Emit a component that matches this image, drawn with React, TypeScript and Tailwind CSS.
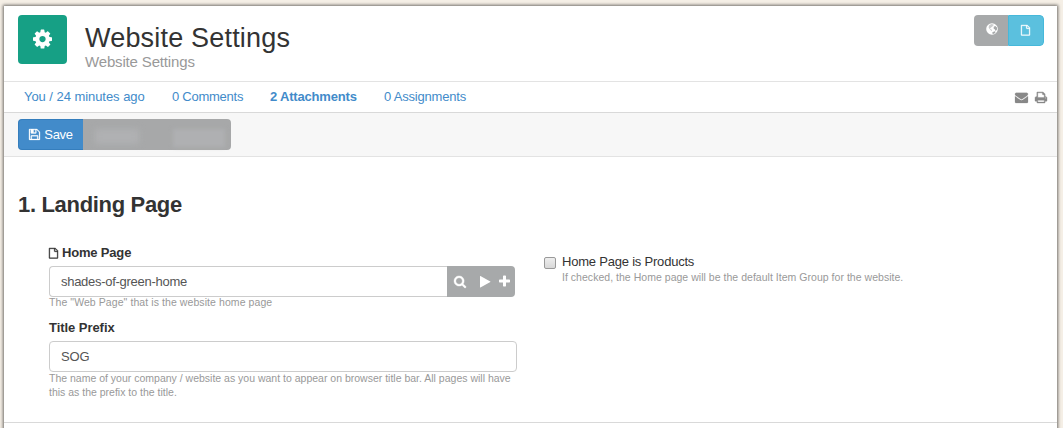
import React from "react";

const paths = {
  cog: "M1024 896q0-106-75-181t-181-75-181 75-75 181 75 181 181 75 181-75 75-181zm512-109v222q0 12-8 23t-20 13l-185 28q-19 54-39 91 35 50 107 138 10 12 10 25t-9 23q-27 37-99 108t-94 71q-12 0-26-9l-138-108q-44 23-91 38-16 136-29 186-7 28-36 28h-222q-14 0-24.5-8.5t-11.5-21.5l-28-184q-49-16-90-37l-141 107q-10 9-25 9-14 0-25-11-126-114-165-168-7-10-7-23 0-12 8-23 15-21 51-66.5t54-70.5q-27-50-41-99l-183-27q-13-2-21-12.5t-8-23.5v-222q0-12 8-23t19-13l186-28q14-46 39-92-40-57-107-138-10-12-10-24 0-10 9-23 26-36 98.5-107.5t94.500-71.500q13 0 26 10l138 107q44-23 91-38 16-136 29-186 7-28 36-28h222q14 0 24.500 8.500t11.500 21.500l28 184q49 16 90 37l142-107q9-9 24-9 13 0 25 10 129 119 165 170 7 8 7 22 0 12-8 23-15 21-51 66.500t-54 70.500q26 50 41 98l183 28q13 2 21 12.500t8 23.500z",
  save: "M384 1536h768v-384h-768v384zm896 0h128v-896q0-14-10-38.500t-20-34.500l-281-281q-10-10-34-20t-39-10v416q0 40-28 68t-68 28h-576q-40 0-68-28t-28-68v-416h-128v1280h128v-416q0-40 28-68t68-28h832q40 0 68 28t28 68v416zm-384-928v-320q0-13-9.500-22.500t-22.500-9.500h-192q-13 0-22.500 9.500t-9.500 22.500v320q0 13 9.500 22.500t22.500 9.500h192q13 0 22.500-9.500t9.500-22.500zm640 32v928q0 40-28 68t-68 28h-1344q-40 0-68-28t-28-68v-1344q0-40 28-68t68-28h928q40 0 88 20t76 48l280 280q28 28 48 76t20 88z",
  file: "M1468 380q28 28 48 76t20 88v1152q0 40-28 68t-68 28h-1344q-40 0-68-28t-28-68v-1600q0-40 28-68t68-28h896q40 0 88 20t76 48zm-444-244v376h376q-10-29-22-41l-313-313q-12-12-41-22zm384 1528v-1024h-416q-40 0-68-28t-28-68v-416h-768v1536h1280z",
  search: "M1152 832q0-185-131.500-316.500t-316.500-131.500-316.500 131.500-131.500 316.500 131.500 316.500 316.500 131.500 316.500-131.500 131.500-316.500zm512 832q0 52-38 90t-90 38q-54 0-90-38l-343-342q-179 124-399 124-143 0-273.500-55.500t-225-150-150-225-55.500-273.500 55.500-273.500 150-225 225-150 273.500-55.500 273.500 55.500 225 150 150 225 55.500 273.500q0 220-124 399l343 343q37 37 37 90z",
  play: "M1384 927l-1328 738q-23 13-39.500 3t-16.500-36v-1472q0-26 16.500-36t39.500 3l1328 738q23 13 23 31t-23 31z",
  plus: "M1408 800v192q0 40-28 68t-68 28h-416v416q0 40-28 68t-68 28h-192q-40 0-68-28t-28-68v-416h-416q-40 0-68-28t-28-68v-192q0-40 28-68t68-28h416v-416q0-40 28-68t68-28h192q40 0 68 28t28 68v416h416q40 0 68 28t28 68z",
  mail: "M1792 710v794q0 66-47 113t-113 47h-1472q-66 0-113-47t-47-113v-794q44 49 101 87 362 246 497 345 57 42 92.500 65.500t94.500 48 110 24.500h2q51 0 110-24.500t94.500-48 92.500-65.500q170-123 498-345 57-39 100-87zm0-294q0 79-49 151t-122 123q-376 261-468 325-10 7-42.500 30.500t-54 38-52 32.500-57.500 27-50 9h-2q-23 0-50-9t-57.500-27-52-32.500-54-38-42.500-30.500q-91-64-262-182.500t-205-142.500q-62-42-117-115.500t-55-136.500q0-78 41.500-130t118.500-52h1472q65 0 112.500 47t47.500 113z",
  print: "M384 1536h896v-256h-896v256zm0-640h896v-384h-160q-40 0-68-28t-28-68v-160h-640v640zm1152 64q0-26-19-45t-45-19-45 19-19 45 19 45 45 19 45-19 19-45zm128 0v416q0 13-9.500 22.500t-22.500 9.500h-224v160q0 40-28 68t-68 28h-960q-40 0-68-28t-28-68v-160h-224q-13 0-22.500-9.500t-9.500-22.500v-416q0-79 56.500-135.500t135.500-56.500h64v-544q0-40 28-68t68-28h672q40 0 88 20t76 48l152 152q28 28 48 76t20 88v256h64q79 0 135.500 56.500t56.500 135.500z",
};

function Icon({ name, width, className = "", weight = 0 }: { name: keyof typeof paths; width: number; className?: string; weight?: number }) {
  const w = name === "mail" ? 1792 : name === "search" || name === "print" ? 1664 : name === "play" || name === "plus" ? 1408 : 1536;
  return (
    <svg viewBox={`0 0 ${w} 1792`} width={width} height={(width * 1792) / w} fill="currentColor" stroke="currentColor" strokeWidth={weight} className={`shrink-0 overflow-visible ${className}`}>
      <path d={paths[name]} />
    </svg>
  );
}

function Globe() {
  return (
    <svg viewBox="0 0 12 12" width="12" height="12" className="mb-[3px] ml-px shrink-0">
      <circle cx="6" cy="6" r="5.800" fill="#fff" />
      <path d="M3.200 2.200 5.500 1l2 .5.3.8-1 .5-.5 1-1 .4-.7.8-.8.1.8.9 1 .4.400.9-.5.900-1.200-1.500L3.300 5.800 2.600 4.300z" fill="#a7a9aa" opacity=".6" />
      <path d="M7.700 3.800 9.300 3l1.700 1.600v1.800l-1 1.400-.9-.4-.3-1.200-1.100-.5z" fill="#a7a9aa" />
      <path d="M6.300 9.300 8.800 8.300l.9.800-1.500 1.600-1.600.3z" fill="#a7a9aa" />
    </svg>
  );
}

function Help({ children, className = "" }: { children: React.ReactNode; className?: string }) {
  return <p className={`text-[10.500px] leading-[14px] text-[#999] ${className}`}>{children}</p>;
}

export default function App() {
  return (
    <div className="h-[428px] w-[1063px] overflow-hidden bg-[#f5efe6] pl-1 pt-1.5 font-['Liberation_Sans',sans-serif] text-[13px] text-[#333]">
      <main className="h-[430px] w-[1053px] bg-white shadow-[0_0_3px_1px_rgba(0,0,0,0.55)]">
        <header className="flex h-[76px] items-start border-b border-[#e3e3e3] pl-3.5 pr-[13px] pt-[9px]">
          <div className="flex h-[49px] w-[49px] items-center justify-center rounded bg-[#16a085] text-white">
            <Icon name="cog" width={19} />
          </div>
          <div className="ml-[18px]">
            <h1 className="mt-[7px] text-[27px] leading-[32px] tracking-[0.190px]">Website Settings</h1>
            <p className="text-[15px] leading-[16px] tracking-[-0.160px] text-[#999]">Website Settings</p>
          </div>
          <div className="ml-auto flex h-[31px] overflow-hidden rounded">
            <button className="flex w-[34px] items-center justify-center bg-[#a7a9aa]"><Globe /></button>
            <button className="flex w-9 items-center justify-center rounded-r border border-[#46b8da] bg-[#5bc0de] pr-px text-white">
              <Icon name="file" width={9} weight={60} className="mb-px" />
            </button>
          </div>
        </header>

        <nav className="flex h-[31px] items-center border-b border-[#d9d9d9] pl-5 pr-2.5 text-[#428bca]">
          <a className="w-[148px] tracking-[-0.050px]">You / 24 minutes ago</a>
          <a className="w-[98px] tracking-[-0.250px]">0 Comments</a>
          <a className="w-[114px] font-bold tracking-[-0.180px]">2 Attachments</a>
          <a className="tracking-[-0.200px]">0 Assignments</a>
          <div className="ml-auto flex items-center gap-[7px] text-[#888]">
            <Icon name="mail" width={13} weight={30} />
            <Icon name="print" width={12} weight={50} />
          </div>
        </nav>

        <div className="flex h-11 items-start border-b border-[#e3e3e3] bg-[#f7f7f7] pl-3.5 pt-1.5">
          <button className="flex h-[31px] w-[65px] items-center justify-center gap-1 rounded-l border border-r-0 border-[#357ebd] bg-[#428bca] text-white">
            <Icon name="save" width={11} weight={40} />
            <span className="tracking-[-0.300px]">Save</span>
          </button>
          <div className="flex h-[31px] w-[148px] items-center justify-between rounded-r bg-[#a7a8a9] pl-3 pr-1.5">
            <div className="mt-1 h-[15px] w-11 bg-[#b0b1b3] blur-[3px]" />
            <div className="mt-1.5 h-[18px] w-[52px] bg-[#afb0b2] blur-[2px]" />
          </div>
        </div>

        <section className="h-[266px] border-b border-[#d9d9d9] pt-[35px]">
          <h2 className="pl-3.5 text-[22px] font-bold leading-[26px] tracking-[-0.320px]">1. Landing Page</h2>
          <div className="flex pl-[45px] pt-[27px]">
            <div className="w-[468px]">
              <label className="flex h-4 items-center gap-1 font-bold tracking-[-0.180px]">
                <Icon name="file" width={9} weight={70} />
                Home Page
              </label>
              <div className="mt-[5px] flex h-[31px] w-[466px]">
                <div className="flex w-[398px] items-center rounded-l border border-r-0 border-[#ccc] pl-[11px] pt-px tracking-[-0.280px] text-[#555]">shades-of-green-home</div>
                <div className="flex w-[68px] items-center rounded-r bg-[#a7a9aa] pl-[7px] text-white">
                  <Icon name="search" width={12} weight={50} />
                  <Icon name="play" width={10.500} className="ml-[14px]" />
                  <Icon name="plus" width={11} className="mb-px ml-2" />
                </div>
              </div>
              <Help className="-mt-0.5 tracking-[0.080px]">The "Web Page" that is the website home page</Help>
              <label className="mt-[11px] block h-4 font-bold leading-4 tracking-[-0.050px]">Title Prefix</label>
              <div className="mt-[5px] flex h-[31px] items-center rounded border border-[#ccc] pl-[11px] tracking-[-0.200px] text-[#555]">SOG</div>
              <Help className="-mt-px">The name of your company / website as you want to appear on browser title bar. All pages will have this as the prefix to the title.</Help>
            </div>
            <div className="ml-[27px] flex items-start pt-[9px]">
              <span className="mt-[3px] h-3 w-3 rounded-[2px] border border-[#999] bg-linear-to-b from-[#eee] to-[#d8d8d8]" />
              <div className="ml-1.5">
                <div className="leading-4 tracking-[-0.210px]">Home Page is Products</div>
                <Help className="tracking-[0.030px]">If checked, the Home page will be the default Item Group for the website.</Help>
              </div>
            </div>
          </div>
        </section>
      </main>
    </div>
  );
}
